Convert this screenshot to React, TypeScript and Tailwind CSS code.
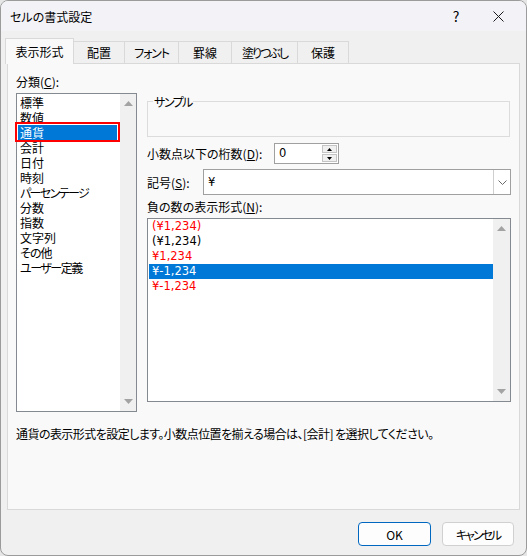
import React from 'react'

// tracking per item: Meiryo UI kana are narrower than Noto's
const categories = [
  { label: '標準', cls: '' },
  { label: '数値', cls: '' },
  { label: '通貨', cls: '' },
  { label: '会計', cls: '' },
  { label: '日付', cls: '' },
  { label: '時刻', cls: '' },
  { label: 'パーセンテージ', cls: 'tracking-[-1.6px]' },
  { label: '分数', cls: '' },
  { label: '指数', cls: '' },
  { label: '文字列', cls: '' },
  { label: 'その他', cls: 'tracking-[-1px]' },
  { label: 'ユーザー定義', cls: 'tracking-[-1.5px]' },
]

const negatives = [
  { label: '(¥1,234)', red: true },
  { label: '(¥1,234)', red: false },
  { label: '¥1,234', red: true },
  { label: '¥-1,234', red: false, selected: true },
  { label: '¥-1,234', red: true },
]

const tabs = [
  { label: '配置', w: 'w-[51px]', cls: '' },
  { label: 'フォント', w: 'w-[54px]', cls: 'tracking-[-1.2px]' },
  { label: '罫線', w: 'w-[53px]', cls: '' },
  { label: '塗りつぶし', w: 'w-[66px]', cls: 'tracking-[-2px]' },
  { label: '保護', w: 'w-[51px]', cls: '' },
]

function Triangle({ up }: { up?: boolean }) {
  return (
    <svg width="9" height="5" viewBox="0 0 9 5">
      {up ? <path d="M4.5 0 L9 5 L0 5 Z" fill="#a3a3a3" /> : <path d="M0 0 L9 0 L4.5 5 Z" fill="#a3a3a3" />}
    </svg>
  )
}

function ScrollTrack({ width }: { width: string }) {
  return (
    <div className={`${width} bg-[#f0f0f0] flex flex-col justify-between items-center py-[7px]`}>
      <Triangle up />
      <Triangle />
    </div>
  )
}

function SpinButton({ up }: { up?: boolean }) {
  return (
    <div className="h-[9px] bg-[#f0f0f0] border border-[#c4c4c4] flex items-center justify-center">
      <svg width="5" height="3" viewBox="0 0 5 3">
        {up ? <path d="M2.5 0 L5 3 L0 3 Z" fill="#000" /> : <path d="M0 0 L5 0 L2.5 3 Z" fill="#000" />}
      </svg>
    </div>
  )
}

export default function App() {
  return (
    <div className="w-[527px] h-[556px] bg-[#e6e6e6] font-['Noto_Sans_CJK_JP',sans-serif] text-[12px] leading-[15px] text-black [font-feature-settings:'palt']">
      <div className="w-full h-full flex flex-col rounded-[8px] border border-[#9b9b9b] overflow-hidden bg-[#f0f0f0]">
        {/* title bar */}
        <div className="h-[30px] flex items-center bg-[#f3f2f7] pl-[9px] pr-[7px]">
          <span>セルの書式設定</span>
          <div className="ml-auto w-[42px] flex justify-center text-[14px]">?</div>
          <div className="w-[42px] flex justify-center">
            <svg width="11" height="11" viewBox="0 0 11 11">
              <path d="M0.5 0.5 L10.5 10.5 M10.5 0.5 L0.5 10.5" stroke="#1b1b1b" strokeWidth="1" />
            </svg>
          </div>
        </div>

        <div className="flex-1 flex flex-col px-[6px] pt-[7px]">
          {/* tabs */}
          <div className="flex items-end h-[25px]">
            <div className="relative z-10 -ml-[2px] -mb-px w-[69px] h-[26px] flex items-center justify-center bg-[#f9f9f9] border-l border-t border-r border-[#d9d9d9]">
              表示形式
            </div>
            {tabs.map((t) => (
              <div
                key={t.label}
                className={`${t.w} h-[22px] flex items-center justify-center border-t border-r border-[#d9d9d9]`}
              >
                <span className={t.cls}>{t.label}</span>
              </div>
            ))}
          </div>

          {/* panel */}
          <div className="h-[447px] border border-[#d9d9d9] bg-[#f9f9f9] flex flex-col pl-[8px] pr-px pt-[10px]">
            <div className="flex items-start gap-[10px]">
              {/* category */}
              <div className="w-[121px] flex flex-col">
                <div>
                  分類(<span className="underline">C</span>):
                </div>
                <div className="mt-[4px] h-[319px] border border-[#858a91] bg-white flex">
                  <div className="flex-1 pt-px">
                    {categories.map((c) =>
                      c.label === '通貨' ? (
                        <div key={c.label} className="relative ml-px mr-[3px] h-[15px] pl-[2px] bg-[#0078d7] text-white">
                          {c.label}
                          <div className="absolute -left-[3px] -right-[3px] -top-[3px] -bottom-[2px] border-2 border-[#ff0000]" />
                        </div>
                      ) : (
                        <div key={c.label} className={`h-[15px] pl-[3px] whitespace-nowrap ${c.cls}`}>
                          {c.label}
                        </div>
                      )
                    )}
                  </div>
                  <ScrollTrack width="w-[16px]" />
                </div>
              </div>

              {/* right column */}
              <div className="w-[364px] flex flex-col">
                <div className="relative mt-[27px] h-[36px] w-[363px] border border-[#dcdcdc]">
                  <span className="absolute left-[5px] -top-[8px] bg-[#f9f9f9] px-px tracking-[-1.5px]">サンプル</span>
                </div>

                <div className="mt-[6px] h-[21px] flex items-center">
                  <div className="w-[127px] whitespace-nowrap">
                    小数点以下の桁数(<span className="underline">D</span>):
                  </div>
                  <div className="w-[65px] h-[21px] border border-[#a0a0a0] bg-white flex">
                    <div className="flex-1 pl-[4px] flex items-center font-['DejaVu_Sans',sans-serif] text-[11.5px]">0</div>
                    <div className="w-[15px] mr-px py-px flex flex-col gap-px">
                      <SpinButton up />
                      <SpinButton />
                    </div>
                  </div>
                </div>

                <div className="mt-[5px] h-[26px] flex items-center">
                  <div className="w-[56px] whitespace-nowrap">
                    記号(<span className="underline">S</span>):
                  </div>
                  <div className="w-[308px] h-[26px] border border-[#a0a0a0] bg-white flex">
                    <div className="flex-1 pl-[4px] flex items-center font-['DejaVu_Sans',sans-serif] text-[11.5px]">¥</div>
                    <div className="w-[17px] border-l border-[#cfcfcf] flex items-center justify-center">
                      <svg width="9" height="5" viewBox="0 0 9 5">
                        <path d="M0.5 0.5 L4.5 4.5 L8.5 0.5" stroke="#6b6b6b" fill="none" strokeWidth="1" />
                      </svg>
                    </div>
                  </div>
                </div>

                <div className="mt-[4px]">
                  負の数の表示形式(<span className="underline">N</span>):
                </div>
                <div className="mt-[4px] h-[184px] border border-[#858a91] bg-white flex">
                  <div className="flex-1 font-['DejaVu_Sans',sans-serif] text-[11.5px]">
                    {negatives.map((n, i) =>
                      n.selected ? (
                        <div key={i} className="ml-px h-[15px] pl-[3px] bg-[#0078d7] text-white">
                          {n.label}
                        </div>
                      ) : (
                        <div key={i} className={`h-[15px] pl-[4px] ${n.red ? 'text-[#ff0000]' : 'text-black'}`}>
                          {n.label}
                        </div>
                      )
                    )}
                  </div>
                  <ScrollTrack width="w-[17px]" />
                </div>
              </div>
            </div>

            <div className="mt-[14px] whitespace-nowrap tracking-[-0.55px]">
              通貨の表示形式を設定します。小数点位置を揃える場合は、[会計] を選択してください。
            </div>
          </div>

          {/* buttons */}
          <div className="mt-[12px] flex justify-end gap-[11px] pr-[6px]">
            <button className="w-[73px] h-[24px] rounded-[4px] border border-[#0067c0] bg-[#fdfdfd] flex items-center justify-center">
              OK
            </button>
            <button className="w-[72px] h-[24px] rounded-[4px] border border-[#d0d0d0] bg-[#fdfdfd] flex items-center justify-center tracking-[-2px]">
              キャンセル
            </button>
          </div>
        </div>
      </div>
    </div>
  )
}
